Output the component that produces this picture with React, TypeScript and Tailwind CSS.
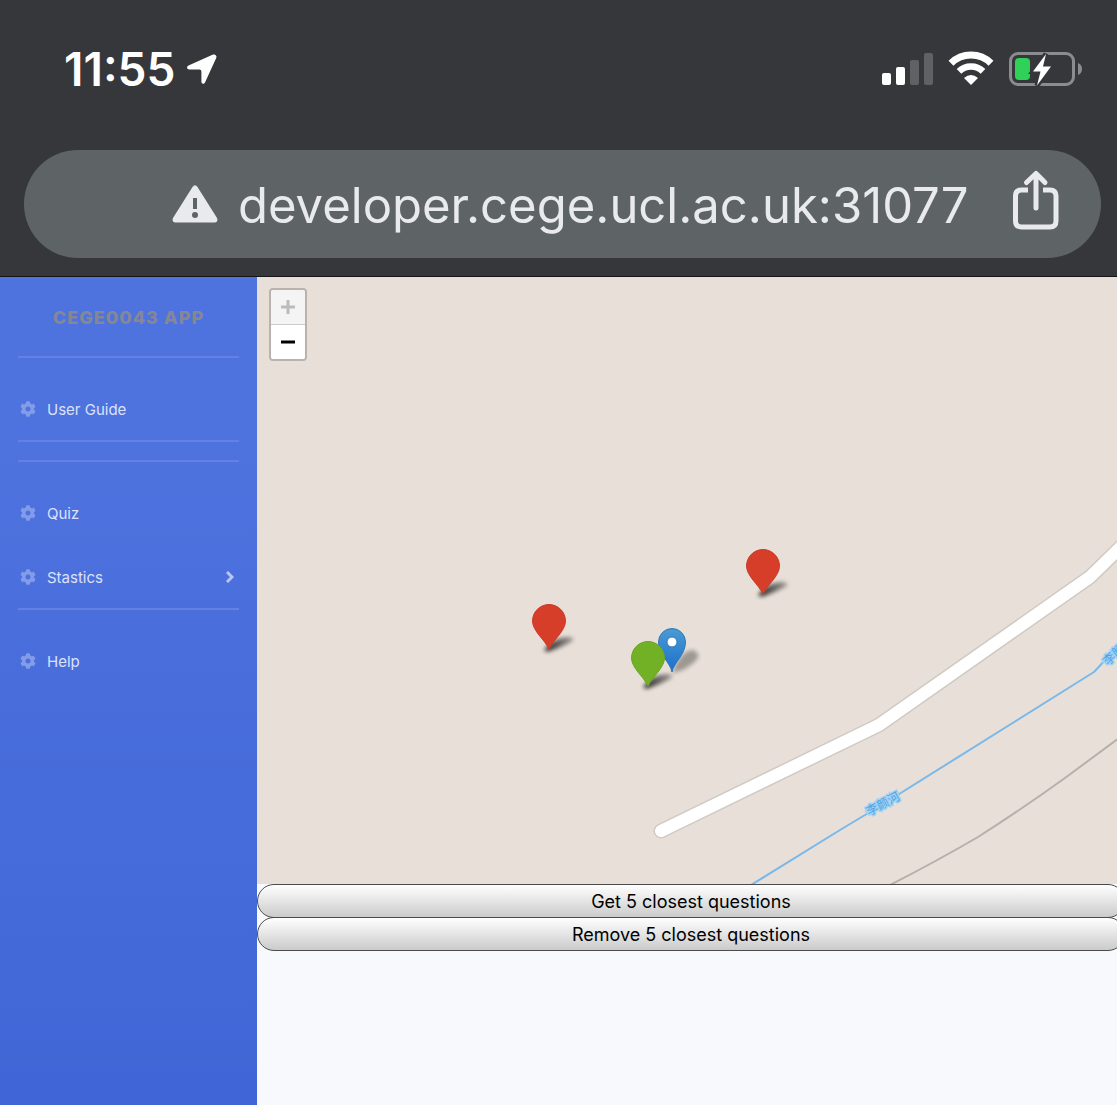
import { FaCog } from "react-icons/fa";

function StatusBar() {
  return (
    <div className="flex h-[150px] items-start justify-between pl-16 pr-[34px] text-white">
      <div className="flex items-center gap-3 pt-[42px]">
        <time className="text-[46px] leading-[54px] font-semibold">11:55</time>
        <svg className="h-[30px] w-[30px]" viewBox="0 0 30 30" fill="white" aria-label="Location">
          <path d="M25.500.700C28 -.400 30.300 1.500 29.200 4L18 28.500C17 30.500 14.400 30 14.400 27.500V17.500Q14.400 15.500 12.400 15.500H2.500C-.200 15.500 -.800 12.600 1.500 11.500Z" />
        </svg>
      </div>
      <div className="flex items-center gap-[15px] pt-[51px]">
        <svg className="h-[36px] w-[51px]" viewBox="0 0 51 36" fill="white" aria-label="Signal">
          <rect x="0" y="22" width="9" height="12" rx="2" />
          <rect x="14" y="16" width="9" height="18" rx="2" />
          <rect x="28" y="9" width="9" height="25" rx="2" fill="#606165" />
          <rect x="42" y="2" width="9" height="32" rx="2" fill="#606165" />
        </svg>
        <svg className="h-[36px] w-[46px]" viewBox="0 0 46 36" fill="none" aria-label="Wi-Fi">
          <path d="M3 12.200A28.500 28.500 0 0 1 43 12.200" stroke="white" strokeWidth="7" />
          <path d="M11 20.400A17 17 0 0 1 35 20.400" stroke="white" strokeWidth="6.500" />
          <path d="M23 34 16 27Q23 21 30 27Z" fill="white" />
        </svg>
        <svg className="h-[36px] w-[74px]" viewBox="0 0 74 36" fill="none" aria-label="Battery charging">
          <rect x="1.500" y="2.500" width="63" height="31" rx="7.500" stroke="#8b8c8f" strokeWidth="3" />
          <path d="M69 12Q73 13.500 73 18T69 24Z" fill="#8b8c8f" />
          <rect x="6" y="7" width="15" height="22" rx="4" fill="#30d158" />
          <path d="M37 3 24 20.500H31.500L28 34.500 42 15.500H34Z" fill="white" stroke="#36373b" strokeWidth="5" paintOrder="stroke" />
        </svg>
      </div>
    </div>
  );
}

function AddressBar() {
  return (
    <div className="ml-6 mr-4 flex h-[108px] items-center rounded-full bg-[#5e6366] pl-[148px] pr-[42px] text-[#e8eaed]">
      <svg className="h-[38px] w-[46px] shrink-0" viewBox="0 0 46 38" aria-label="Not secure">
        <path d="M20.500 2Q23 -1.500 25.500 2L45 33Q46.500 37 43 37.500H3Q-.500 37 1 33Z" fill="#e8eaed" />
        <rect x="21" y="13" width="4" height="11" fill="#5e6366" />
        <circle cx="23" cy="30" r="3" fill="#5e6366" />
      </svg>
      <span className="ml-5 pt-1 text-[49px] leading-[60px] whitespace-nowrap">developer.cege.ucl.ac.uk:31077</span>
      <button className="mb-2 ml-auto" aria-label="Share">
        <svg className="h-[60px] w-[46px]" viewBox="0 0 46 60" fill="none" stroke="#e8eaed" strokeWidth="5">
          <path d="M15 20H8.500Q2.500 20 2.500 26V51Q2.500 57 8.500 57H37Q43 57 43 51V26Q43 20 37 20H30" />
          <path d="M23 38V4M13.500 12.500 23 3.500 32 12.500" strokeLinecap="round" strokeLinejoin="round" />
        </svg>
      </button>
    </div>
  );
}

function NavItem({ label, expandable = false }: { label: string; expandable?: boolean }) {
  return (
    <a href="#" className="flex h-16 items-center pl-5 pr-[23px] text-[15px] text-[#dbe2fa]">
      <FaCog className="mr-[11px] size-4 shrink-0 text-[#839ce9]" />
      <span className="pt-0.5">{label}</span>
      {expandable && (
        <svg className="ml-auto h-3 w-2" viewBox="0 0 8 12" fill="none" stroke="#b8c6f3" strokeWidth="3">
          <path d="M1 1 6 6 1 11" />
        </svg>
      )}
    </a>
  );
}

function Divider() {
  return <hr className="mx-[18px] -mt-px h-[2px] border-0 bg-[#6480e2]" />;
}

function Sidebar() {
  return (
    <nav className="w-[257px] shrink-0 bg-linear-to-b from-[#4e73df] from-20% to-[#4065d6]">
      <a href="#" className="flex h-20 items-center justify-center text-[18px] font-extrabold tracking-[1px] text-[#858796]">
        CEGE0043 APP
      </a>
      <Divider />
      <div className="h-[19px]" />
      <NavItem label="User Guide" />
      <Divider />
      <div className="h-[19px]" />
      <Divider />
      <div className="h-[19px]" />
      <NavItem label="Quiz" />
      <NavItem label="Stastics" expandable />
      <Divider />
      <div className="h-[19px]" />
      <NavItem label="Help" />
    </nav>
  );
}

function RoundPin({ x, y, fill, edge }: { x: number; y: number; fill: string; edge: string }) {
  return (
    <g transform={`translate(${x} ${y})`}>
      <path d="M-5 0Q4 -12 18 -13Q30 -12 20 -7Q8 -1 -2 2Z" fill="url(#shade)" filter="url(#soft)" />
      <path
        d="M0 -1C-4 -10 -16.500 -19 -16.500 -29A16.500 16.500 0 0 1 16.500 -29C16.500 -19 4 -10 0 -1Z"
        fill={fill}
        stroke={edge}
      />
    </g>
  );
}

function RiverLabel({ x, y, angle }: { x: number; y: number; angle: number }) {
  return (
    <text
      transform={`translate(${x} ${y}) rotate(${angle})`}
      className="font-['Noto_Sans_CJK_SC',sans-serif] text-[12px]"
      fill="#4ba3e3"
      stroke="#a5d2f3"
      strokeWidth="3"
      paintOrder="stroke"
    >
      李颜河
    </text>
  );
}

function MapView() {
  return (
    <section className="relative h-[607px] overflow-hidden bg-[#e8e0d8]" aria-label="Map">
      <svg className="h-full w-full" viewBox="0 0 860 607" preserveAspectRatio="xMinYMin slice" fill="none">
        <defs>
          <filter id="soft" x="-50%" y="-50%" width="200%" height="200%">
            <feGaussianBlur stdDeviation="2" />
          </filter>
          <linearGradient id="shade" x1="0" y1="0" x2="1" y2="0">
            <stop offset="0.2" stopColor="#000" stopOpacity="0.75" />
            <stop offset="1" stopColor="#000" stopOpacity="0.3" />
          </linearGradient>
          <linearGradient id="bluePin" x1="0" y1="0" x2="0" y2="1">
            <stop offset="0" stopColor="#4a9bd4" />
            <stop offset="1" stopColor="#1b6fcb" />
          </linearGradient>
        </defs>
        <g strokeLinecap="round" strokeLinejoin="round">
          <path d="M404 554 622 448 833 300 870 264" stroke="#d0cac4" strokeWidth="15" />
          <path d="M404 554 622 448 833 300 870 264" stroke="#fff" strokeWidth="12" />
          <path d="M494 608 583 553 623 529 837 395 851 380 864 362" stroke="#7ab8ea" strokeWidth="2" />
          <path d="M633 608Q680 584 721 560 765 532 808 501L862 461" stroke="#b5b0ab" strokeWidth="2" />
        </g>
        <RiverLabel x={612} y={539} angle={-28} />
        <RiverLabel x={851} y={389} angle={-44} />
        <RoundPin x={292} y={373} fill="#d63e2a" edge="#cb3b28" />
        <RoundPin x={506} y={318} fill="#d63e2a" edge="#cb3b28" />
        <g transform="translate(415 396)">
          <path d="M0 0Q8 -22 21 -23Q32 -18 20 -9Q12 -2 0 0Z" fill="#000" opacity="0.32" filter="url(#soft)" />
          <path
            d="M0 -1C-2 -11 -13.500 -18 -13.500 -31A13.500 13.500 0 0 1 13.500 -31C13.500 -18 2 -11 0 -1Z"
            fill="url(#bluePin)"
            stroke="#2f78b5"
          />
          <circle cy="-31" r="5" fill="#fff" stroke="#2f78b5" />
        </g>
        <RoundPin x={391} y={410} fill="#72b026" edge="#6ba524" />
      </svg>
      <div className="absolute top-[11px] left-3 flex flex-col overflow-hidden rounded-[4px] border-2 border-[#bab3ad]">
        <button
          disabled
          aria-label="Zoom in"
          className="flex h-[35px] w-[34px] items-center justify-center border-b border-[#ccc] bg-[#f4f4f4] text-[#bbb]"
        >
          <svg className="size-[14px]" viewBox="0 0 14 14" stroke="currentColor" strokeWidth="3">
            <path d="M0 7H14M7 0V14" />
          </svg>
        </button>
        <button aria-label="Zoom out" className="flex h-[34px] w-[34px] items-center justify-center bg-white text-black">
          <svg className="size-[14px]" viewBox="0 0 14 14" stroke="currentColor" strokeWidth="3">
            <path d="M0 7H14" />
          </svg>
        </button>
      </div>
    </section>
  );
}

function ActionButton({ label }: { label: string }) {
  return (
    <button className="-mb-px h-[34px] rounded-full border border-[#4b4b4b] bg-linear-to-b from-white to-[#cbcbcb] pt-px text-[18px] leading-6 text-black">
      {label}
    </button>
  );
}

export default function App() {
  return (
    <div className="flex min-h-screen flex-col overflow-hidden bg-[#36373b] font-[Inter,sans-serif]">
      <header className="border-b border-[#151619] pb-[18px]">
        <StatusBar />
        <AddressBar />
      </header>
      <div className="flex flex-1">
        <Sidebar />
        <main className="min-w-0 flex-1 bg-[#f8f9fc]">
          <MapView />
          <div className="-mr-2 flex flex-col">
            <ActionButton label="Get 5 closest questions" />
            <ActionButton label="Remove 5 closest questions" />
          </div>
        </main>
      </div>
    </div>
  );
}
